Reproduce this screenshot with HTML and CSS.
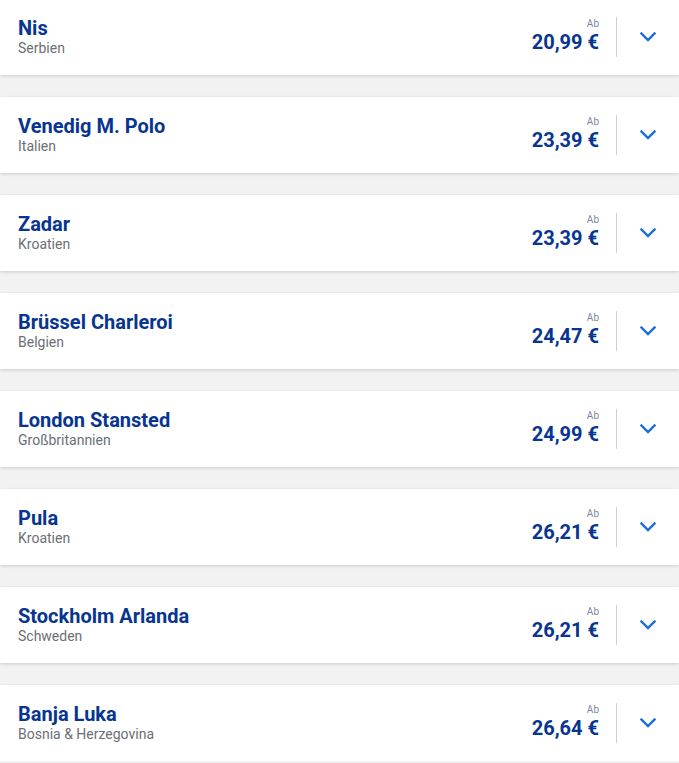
FILE: index.html
```html
<!DOCTYPE html>
<html lang="de">
<head>
<meta charset="utf-8">
<title>Ziele</title>
<link rel="stylesheet" href="styles.css">
</head>
<body>
<div class="list">
  <div class="card">
    <div class="info"><div class="title">Nis</div><div class="sub">Serbien</div></div>
    <div class="price"><div class="ab">Ab</div><div class="amount">20,99 €</div></div>
    <div class="divider"></div>
    <div class="toggle"><svg width="16" height="10" viewBox="0 0 16 10"><path d="M1.5 1.5 L8 8 L14.5 1.5" fill="none" stroke="#1a6ed8" stroke-width="2.4" stroke-linecap="square"/></svg></div>
  </div>
  <div class="card">
    <div class="info"><div class="title">Venedig M. Polo</div><div class="sub">Italien</div></div>
    <div class="price"><div class="ab">Ab</div><div class="amount">23,39 €</div></div>
    <div class="divider"></div>
    <div class="toggle"><svg width="16" height="10" viewBox="0 0 16 10"><path d="M1.5 1.5 L8 8 L14.5 1.5" fill="none" stroke="#1a6ed8" stroke-width="2.4" stroke-linecap="square"/></svg></div>
  </div>
  <div class="card">
    <div class="info"><div class="title">Zadar</div><div class="sub">Kroatien</div></div>
    <div class="price"><div class="ab">Ab</div><div class="amount">23,39 €</div></div>
    <div class="divider"></div>
    <div class="toggle"><svg width="16" height="10" viewBox="0 0 16 10"><path d="M1.5 1.5 L8 8 L14.5 1.5" fill="none" stroke="#1a6ed8" stroke-width="2.4" stroke-linecap="square"/></svg></div>
  </div>
  <div class="card">
    <div class="info"><div class="title">Brüssel Charleroi</div><div class="sub">Belgien</div></div>
    <div class="price"><div class="ab">Ab</div><div class="amount">24,47 €</div></div>
    <div class="divider"></div>
    <div class="toggle"><svg width="16" height="10" viewBox="0 0 16 10"><path d="M1.5 1.5 L8 8 L14.5 1.5" fill="none" stroke="#1a6ed8" stroke-width="2.4" stroke-linecap="square"/></svg></div>
  </div>
  <div class="card">
    <div class="info"><div class="title">London Stansted</div><div class="sub">Großbritannien</div></div>
    <div class="price"><div class="ab">Ab</div><div class="amount">24,99 €</div></div>
    <div class="divider"></div>
    <div class="toggle"><svg width="16" height="10" viewBox="0 0 16 10"><path d="M1.5 1.5 L8 8 L14.5 1.5" fill="none" stroke="#1a6ed8" stroke-width="2.4" stroke-linecap="square"/></svg></div>
  </div>
  <div class="card">
    <div class="info"><div class="title">Pula</div><div class="sub">Kroatien</div></div>
    <div class="price"><div class="ab">Ab</div><div class="amount">26,21 €</div></div>
    <div class="divider"></div>
    <div class="toggle"><svg width="16" height="10" viewBox="0 0 16 10"><path d="M1.5 1.5 L8 8 L14.5 1.5" fill="none" stroke="#1a6ed8" stroke-width="2.4" stroke-linecap="square"/></svg></div>
  </div>
  <div class="card">
    <div class="info"><div class="title">Stockholm Arlanda</div><div class="sub">Schweden</div></div>
    <div class="price"><div class="ab">Ab</div><div class="amount">26,21 €</div></div>
    <div class="divider"></div>
    <div class="toggle"><svg width="16" height="10" viewBox="0 0 16 10"><path d="M1.5 1.5 L8 8 L14.5 1.5" fill="none" stroke="#1a6ed8" stroke-width="2.4" stroke-linecap="square"/></svg></div>
  </div>
  <div class="card">
    <div class="info"><div class="title">Banja Luka</div><div class="sub">Bosnia &amp; Herzegovina</div></div>
    <div class="price"><div class="ab">Ab</div><div class="amount">26,64 €</div></div>
    <div class="divider"></div>
    <div class="toggle"><svg width="16" height="10" viewBox="0 0 16 10"><path d="M1.5 1.5 L8 8 L14.5 1.5" fill="none" stroke="#1a6ed8" stroke-width="2.4" stroke-linecap="square"/></svg></div>
  </div>
</div>
</body>
</html>
```
FILE: styles.css
```css
html, body {
  margin: 0;
  padding: 0;
  background: #f2f2f2;
  font-family: Roboto, "Liberation Sans", sans-serif;
  overflow: hidden;
}
.list {
  display: flex;
  flex-direction: column;
  gap: 22px;
  margin-top: -1px;
}
.card {
  height: 76px;
  flex: none;
  background: #fff;
  box-shadow: 0 1px 3px rgba(0, 0, 0, 0.16);
  display: flex;
  align-items: center;
  padding-left: 18px;
}
.info {
  flex: 1;
  padding-bottom: 2px;
}
.title {
  font-size: 20px;
  line-height: 24px;
  font-weight: 700;
  color: #073590;
}
.sub {
  font-size: 14px;
  line-height: 16px;
  color: #6b6f75;
}
.price {
  text-align: right;
  padding-bottom: 2px;
}
.ab {
  font-size: 10px;
  line-height: 12px;
  color: #7a86a0;
}
.amount {
  font-size: 20px;
  line-height: 24px;
  font-weight: 700;
  color: #073590;
}
.divider {
  width: 1px;
  height: 40px;
  background: #cfcfcf;
  margin-left: 17px;
}
.toggle {
  width: 62px;
  display: flex;
  justify-content: center;
  align-items: center;
}
.toggle svg {
  display: block;
}
```
